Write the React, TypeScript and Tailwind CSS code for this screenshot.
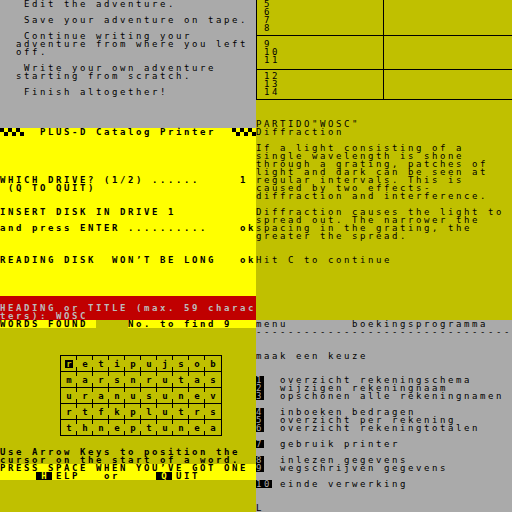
import { clsx } from 'clsx';

// ZX Spectrum style screens, 8x8 character cells (32 columns per panel)

function Line({ text = '', className }: { text?: string; className?: string }) {
  return <div className={clsx('h-[8px] leading-[8px] whitespace-pre', className)}>{text}</div>;
}

function Gap({ rows }: { rows: number }) {
  return (
    <>
      {Array.from({ length: rows }).map((_, i) => (
        <Line key={i} />
      ))}
    </>
  );
}

function Checker() {
  return (
    <div className="grid grid-cols-6 w-[24px] h-[8px]">
      {Array.from({ length: 12 }).map((_, i) => {
        const r = Math.floor(i / 6);
        const c = i % 6;
        return <div key={i} className={(r + c) % 2 === 0 ? 'bg-black' : ''} />;
      })}
    </div>
  );
}

const board = ['retipujsob', 'marsnrutas', 'uranusunev', 'rtfkplutrs', 'thneptunea'];

function Board() {
  return (
    <div className="ml-[60px] mt-[27px] w-[162px] border-t border-l border-r border-black">
      {board.map((word, r) => (
        <div key={r} className="flex h-[16px] border-b border-black">
          {word.split('').map((ch, c) => (
            <div key={c} className="relative w-[16px] flex items-center justify-center">
              {r === 0 && c === 0 ? (
                <span className="inline-block w-[8px] h-[8px] leading-[8px] bg-black text-[#c0c000] text-center tracking-normal">
                  {ch}
                </span>
              ) : (
                <span className="tracking-normal leading-[8px]">{ch}</span>
              )}
              {c < 9 && (
                <>
                  <span className="absolute right-0 top-0 w-px h-[4px] bg-black" />
                  <span className="absolute right-0 bottom-0 w-px h-[4px] bg-black" />
                </>
              )}
            </div>
          ))}
        </div>
      ))}
    </div>
  );
}

function MenuItem({ k, text }: { k: string; text: string }) {
  return (
    <div className="flex h-[8px] leading-[8px] whitespace-pre">
      <span className="inline-block h-[8px] bg-black text-[#aaaaaa]">{k}</span>
      <span>{' '.repeat(3 - k.length) + text}</span>
    </div>
  );
}

function NumCell({ nums }: { nums: string[] }) {
  return (
    <>
      {nums.map((n) => (
        <Line key={n} text={n} />
      ))}
    </>
  );
}

export default function App() {
  return (
    <div className="w-[512px] h-[512px] overflow-hidden flex flex-col text-black text-[9px] tracking-[2.58px] font-['DejaVu_Sans_Mono',monospace]">
      <div className="flex h-[320px]">
        {/* Adventure menu + PLUS-D catalog + heading prompt */}
        <div className="w-[256px] flex flex-col overflow-hidden">
          <section className="h-[128px] bg-[#aaaaaa]">
            <Line text="   Edit the adventure." />
            <Gap rows={1} />
            <Line text="   Save your adventure on tape." />
            <Gap rows={1} />
            <Line text="   Continue writing your" />
            <Line text="  adventure from where you left" />
            <Line text="  off." />
            <Gap rows={1} />
            <Line text="   Write your own adventure" />
            <Line text="  starting from scratch." />
            <Gap rows={1} />
            <Line text="   Finish altogether!" />
          </section>

          <section className="h-[168px] bg-[#ffff00] font-bold">
            <div className="flex h-[8px] leading-[8px] whitespace-pre">
              <Checker />
              <span className="pl-[16px]">PLUS-D Catalog Printer</span>
              <div className="ml-auto">
                <Checker />
              </div>
            </div>
            <Gap rows={5} />
            <Line text="WHICH DRIVE? (1/2) ......     1" />
            <Line text=" (Q TO QUIT)" />
            <Gap rows={2} />
            <Line text="INSERT DISK IN DRIVE 1" />
            <Gap rows={1} />
            <Line text="and press ENTER ..........    ok" />
            <Gap rows={3} />
            <Line text="READING DISK  WON’T BE LONG   ok" />
          </section>

          <section className="h-[24px] bg-[#c00000] text-[#bcbcbc] font-bold pt-[8px]">
            <Line text="HEADING or TITLE (max. 59 charac" />
            <Line text="ters): WOSC" />
          </section>
        </div>

        {/* Table + diffraction text */}
        <section className="w-[256px] bg-[#c0c000] overflow-hidden">
          <div className="flex h-[36px] border-b border-black">
            <div className="w-[128px] border-l border-r border-black pl-[7px]">
              <NumCell nums={['5', '6', '7', '8']} />
            </div>
          </div>
          <div className="flex h-[34px] border-b border-black">
            <div className="w-[128px] border-l border-r border-black pl-[7px] pt-[4px]">
              <NumCell nums={['9', '10', '11']} />
            </div>
          </div>
          <div className="flex h-[30px] border-b border-black">
            <div className="w-[128px] border-l border-r border-black pl-[7px] pt-[2px]">
              <NumCell nums={['12', '13', '14']} />
            </div>
          </div>
          <div className="mt-[20px]">
            <Line text={'PARTIDO"WOSC"'} />
            <Line text="Diffraction" />
            <Gap rows={1} />
            <Line text="If a light consisting of a" />
            <Line text="single wavelength is shone" />
            <Line text="through a grating, patches of" />
            <Line text="light and dark can be seen at" />
            <Line text="regular intervals. This is" />
            <Line text="caused by two effects-" />
            <Line text="diffraction and interference." />
            <Gap rows={1} />
            <Line text="Diffraction causes the light to" />
            <Line text="spread out. The narrower the" />
            <Line text="spacing in the grating, the" />
            <Line text="greater the spread." />
            <Gap rows={2} />
            <Line text="Hit C to continue" />
          </div>
        </section>
      </div>

      <div className="flex h-[192px]">
        {/* Word search */}
        <section className="w-[256px] bg-[#c0c000] font-bold overflow-hidden">
          <div className="flex h-[8px] leading-[8px] whitespace-pre">
            <div className="w-[96px] bg-[#ffff00]">WORDS FOUND</div>
            <div className="w-[32px]" />
            <div className="flex-1 bg-[#ffff00]">No. to find 9</div>
          </div>
          <Board />
          <div className="mt-[12px]">
            <Line text="Use Arrow Keys to position the" />
            <Line text="cursor on the start of a word." />
          </div>
          <div className="bg-[#ffff00]">
            <Line text="PRESS SPACE WHEN YOU’VE GOT ONE" />
            <div className="flex h-[8px] leading-[8px] whitespace-pre">
              <span className="ml-[36px] w-[16px] h-[8px] bg-black text-[#ffff00] text-center tracking-normal">H</span>
              <span className="ml-[4px]">ELP</span>
              <span className="ml-[24px]">or</span>
              <span className="ml-[36px] w-[16px] h-[8px] bg-black text-[#ffff00] text-center tracking-normal">Q</span>
              <span className="ml-[4px]">UIT</span>
            </div>
          </div>
        </section>

        {/* Booking program menu */}
        <section className="w-[256px] bg-[#aaaaaa] overflow-hidden">
          <Line text="menu        boekingsprogramma" />
          <Line text="--------------------------------" />
          <Gap rows={2} />
          <Line text="maak een keuze" />
          <Gap rows={2} />
          <MenuItem k="1" text="overzicht rekeningschema" />
          <MenuItem k="2" text="wijzigen rekeningnaam" />
          <MenuItem k="3" text="opschonen alle rekeningnamen" />
          <Gap rows={1} />
          <MenuItem k="4" text="inboeken bedragen" />
          <MenuItem k="5" text="overzicht per rekening" />
          <MenuItem k="6" text="overzicht rekeningtotalen" />
          <Gap rows={1} />
          <MenuItem k="7" text="gebruik printer" />
          <Gap rows={1} />
          <MenuItem k="8" text="inlezen gegevens" />
          <MenuItem k="9" text="wegschrijven gegevens" />
          <Gap rows={1} />
          <MenuItem k="10" text="einde verwerking" />
          <Gap rows={2} />
          <Line text="L" />
        </section>
      </div>
    </div>
  );
}
